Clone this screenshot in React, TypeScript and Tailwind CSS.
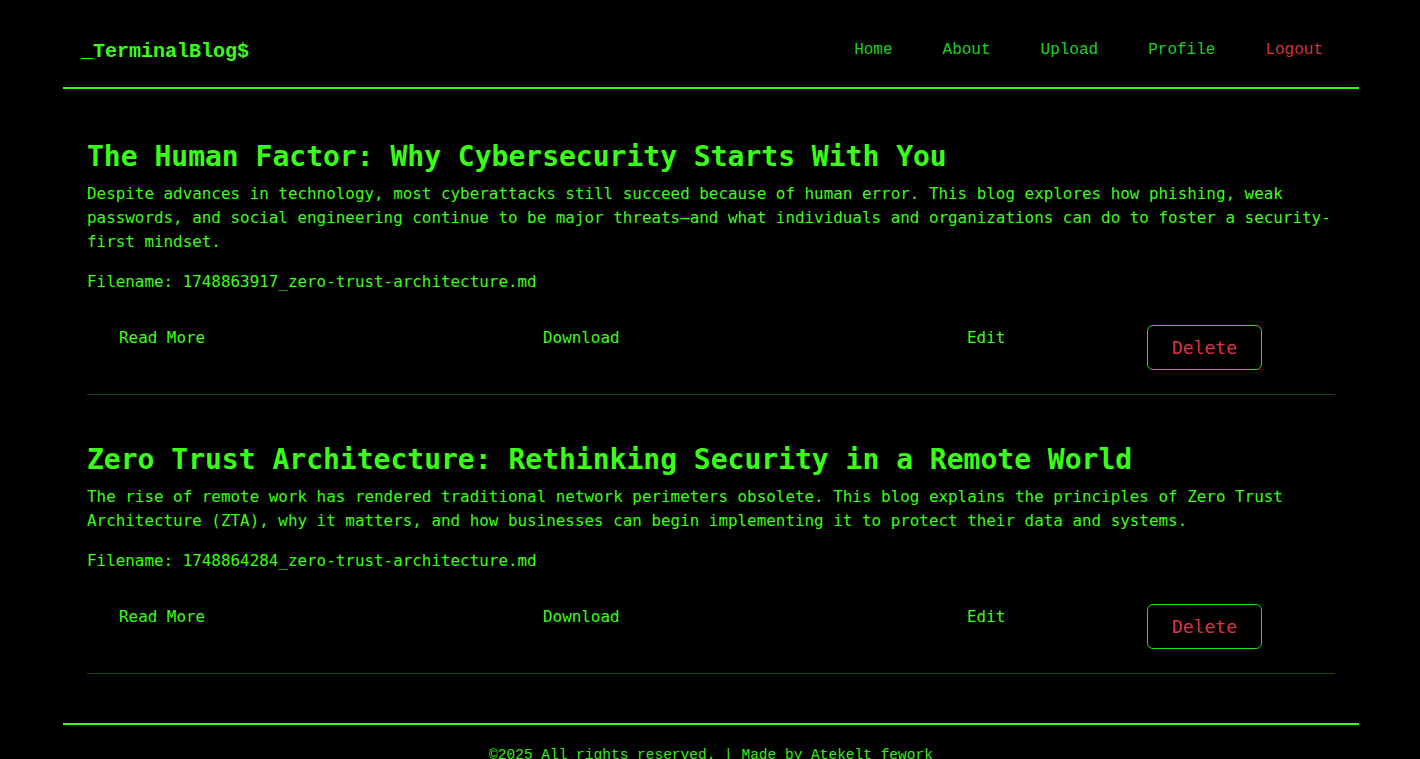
import React from 'react';

interface Post {
    title: string;
    summary: string;
    filename: string;
}

const posts: Post[] = [
    {
        title: 'The Human Factor: Why Cybersecurity Starts With You',
        summary:
            'Despite advances in technology, most cyberattacks still succeed because of human error. This blog explores how phishing, weak passwords, and social engineering continue to be major threats—and what individuals and organizations can do to foster a security-first mindset.',
        filename: '1748863917_zero-trust-architecture.md',
    },
    {
        title: 'Zero Trust Architecture: Rethinking Security in a Remote World',
        summary:
            'The rise of remote work has rendered traditional network perimeters obsolete. This blog explains the principles of Zero Trust Architecture (ZTA), why it matters, and how businesses can begin implementing it to protect their data and systems.',
        filename: '1748864284_zero-trust-architecture.md',
    },
];

const navLinks = ['Home', 'About', 'Upload', 'Profile'];

const PostCard: React.FC<{ post: Post }> = ({ post }) => (
    <article className="pt-6 pb-6 mb-6 border-b border-[#1c4a12]">
        <h2 className="text-[28px] leading-[34px] font-bold text-[#39ff14]">{post.title}</h2>
        <p className="mt-2 text-[15.9px] leading-6 text-[#39ff14]">{post.summary}</p>
        <p className="mt-4 text-[15.9px] leading-6 text-[#39ff14]">Filename: {post.filename}</p>
        <div className="mt-[31px] flex items-start">
            <a href="#" className="w-[424px] pl-8 text-[15.9px] leading-6 pt-px text-[#39ff14]">Read More</a>
            <a href="#" className="w-[424px] pl-8 text-[15.9px] leading-6 pt-px text-[#39ff14]">Download</a>
            <a href="#" className="w-[212px] pl-8 text-[15.9px] leading-6 pt-px text-[#39ff14]">Edit</a>
            <button className="px-6 py-2 text-[18px] leading-[27px] text-[#dc3545] border border-[#22dd22] rounded-md bg-black">
                Delete
            </button>
        </div>
    </article>
);

export default function App() {
    return (
        <div className="min-h-screen bg-black font-['DejaVu_Sans_Mono',monospace]">
            <div className="ml-[63px] w-[1296px]">
                <header className="h-[89px] pt-[14px] flex items-center justify-between pl-[18px] pr-5 border-b-2 border-[#39ff14]">
                    <span className="font-['Liberation_Mono',monospace] font-bold text-[20px] text-[#39ff14] pt-0.5">
                        _TerminalBlog$
                    </span>
                    <nav className="flex items-center gap-[18px] font-['Liberation_Mono',monospace] text-[16px] pb-0.5">
                        {navLinks.map((l) => (
                            <a key={l} href="#" className="px-4 text-[#1fd11f]">{l}</a>
                        ))}
                        <a href="#" className="px-4 text-[#d0343f]">Logout</a>
                    </nav>
                </header>

                <main className="px-6 pt-[27px] pb-[25px]">
                    {posts.map((p) => (
                        <PostCard key={p.filename} post={p} />
                    ))}
                </main>

                <footer className="border-t-2 border-[#39ff14] pt-5 pb-6 text-center">
                    <p className="font-['Liberation_Mono',monospace] text-[14.5px] leading-5 text-[#33ee11]">
                        ©2025 All rights reserved.  | Made by Atekelt fework
                    </p>
                </footer>
            </div>
        </div>
    );
}
